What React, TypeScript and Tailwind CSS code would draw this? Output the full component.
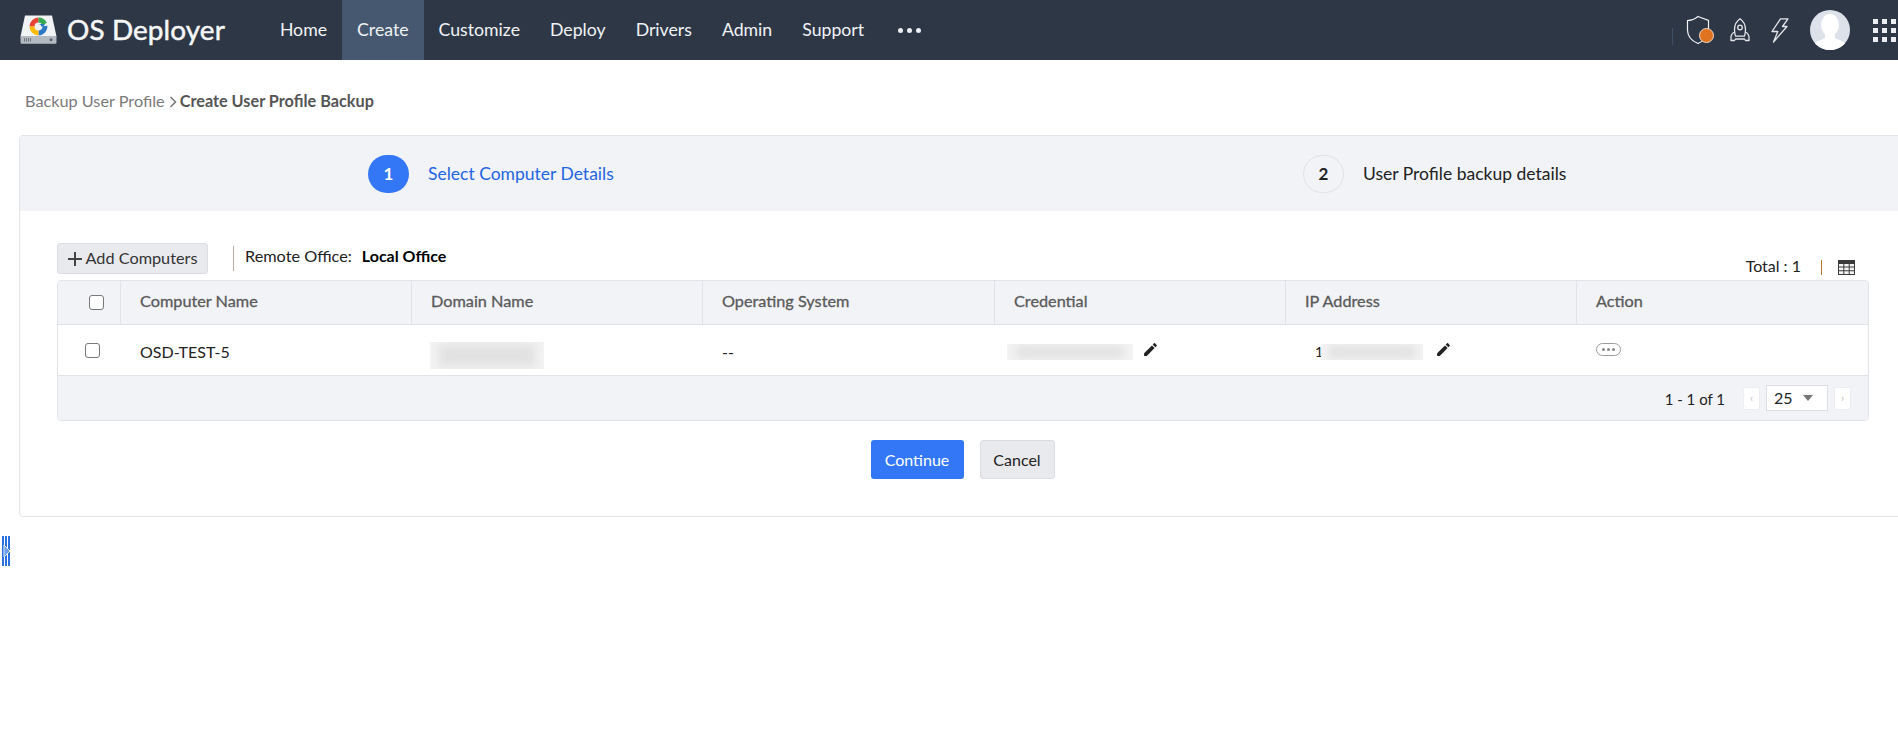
const navItems = ["Home", "Create", "Customize", "Deploy", "Drivers", "Admin", "Support"];

const Pencil = () => (
  <svg viewBox="0 0 24 24" className="w-[17px] h-[17px] fill-[#222]">
    <path d="M3 17.25V21h3.75L17.81 9.94l-3.75-3.75L3 17.25zM20.71 7.04a1 1 0 0 0 0-1.41l-2.34-2.34a1 1 0 0 0-1.41 0l-1.83 1.83 3.75 3.75 1.83-1.83z" />
  </svg>
);

const Blurred = ({ className }: { className: string }) => (
  <div className={`overflow-hidden bg-[#f3f3f3] ${className}`}>
    <div className="w-full h-full bg-[#e2e2e2] blur-[5px] scale-[0.85]" />
  </div>
);

const Checkbox = () => (
  <div className="w-[15px] h-[15px] rounded-[3px] border border-[#77787c] bg-white" />
);

const Logo = () => (
  <svg viewBox="0 0 37 29" className="w-[37px] h-[29px]">
    <path d="M5 0.5h27l4.5 21h-36z" fill="#f1f2f4" />
    <path d="M0.5 21h36v6.5a1.2 1.2 0 0 1-1.2 1.2H1.7a1.2 1.2 0 0 1-1.2-1.2z" fill="#b4bac2" />
    <path d="M4 23h1v3.5H4zM6 23h1v3.5H6zM8 23h1v3.5H8zM10 23h1v3.5h-1z" fill="#6d747d" />
    <circle cx="31" cy="24.8" r="1.5" fill="#5d646d" />
    <g fill="none" strokeWidth="5">
      <path d="M12 11.5a6.5 6.5 0 0 1 6.5-6.5" stroke="#ea4335" />
      <path d="M18.5 5a6.5 6.5 0 0 1 6 4" stroke="#34a853" />
      <path d="M25 11a6.5 6.5 0 0 1-6.5 7" stroke="#2b78c5" />
      <path d="M18.5 18a6.5 6.5 0 0 1-6.5-6.5" stroke="#fbbc05" />
    </g>
    <path d="M18 9h7l-1.5 2.5h-5z" fill="#2b78c5" />
    <circle cx="18.5" cy="11.5" r="2.6" fill="#f1f2f4" />
  </svg>
);

const Shield = () => (
  <div className="relative w-[28px] h-[30px]">
    <svg viewBox="0 0 24 30" className="w-[24px] h-[30px]" fill="none" stroke="#f4f5f7" strokeWidth="1.2">
      <path d="M12 1.5 L22.5 5.5 V15 C22.5 21 18 26 12 28.5 C6 26 1.5 21 1.5 15 V5.5 C6 5.5 9 4 12 1.5z" />
    </svg>
    <div className="absolute right-0 bottom-[2px] w-[15px] h-[15px] rounded-full bg-[#e07320] border border-[#f1d9c4]" />
  </div>
);

const Rocket = () => (
  <svg viewBox="0 0 20 24" className="w-[20px] h-[24px]" fill="none" stroke="#e4e6ea" strokeWidth="1.3" strokeLinejoin="round">
    <path d="M10 0.8C13.8 3.5 15.5 7.5 15.5 11.5c0 2.5-.4 4.5-1 6.7H5.5c-.6-2.2-1-4.2-1-6.7C4.5 7.5 6.2 3.5 10 0.8z" />
    <circle cx="10" cy="9.5" r="2.3" />
    <path d="M4.8 14 C2.5 15 1 17 1 19.5V22.5h3.5l1-1.5h9l1 1.5H19v-3c0-2.5-1.5-4.5-3.8-5.5" />
  </svg>
);

const Bolt = () => (
  <svg viewBox="0 0 18 25" className="w-[18px] h-[25px]" fill="none" stroke="#e4e6ea" strokeWidth="1.3" strokeLinejoin="round">
    <path d="M9.5 0.8H17L11.5 8.5H16L2.5 24 6.8 13.5H1z" />
  </svg>
);

const Avatar = () => (
  <svg viewBox="0 0 40 40" className="w-[40px] h-[40px]">
    <defs>
      <clipPath id="avatar-clip">
        <circle cx="20" cy="20" r="20" />
      </clipPath>
    </defs>
    <circle cx="20" cy="20" r="20" fill="#dde1ea" />
    <g clipPath="url(#avatar-clip)" fill="#fff">
      <ellipse cx="20" cy="15" rx="9" ry="11" />
      <path d="M15 24h10v4c3 2 9 3 11 6v6H4v-6c2-3 8-4 11-6z" />
    </g>
  </svg>
);

const AppsGrid = () => (
  <div className="grid grid-cols-[5px_5px_5px] gap-[4px]">
    {Array.from({ length: 9 }).map((_, i) => (
      <div key={i} className="w-[5px] h-[5px] bg-[#eceef1]" />
    ))}
  </div>
);

const TableIcon = () => (
  <svg viewBox="0 0 17 15" className="w-[17px] h-[15px]">
    <path d="M0 0h17v15H0z" fill="#3a3a3a" />
    <path d="M1 4h4.3v2.6H1zM6.3 4h4.4v2.6H6.3zM11.7 4H16v2.6h-4.3zM1 7.6h4.3v2.6H1zM6.3 7.6h4.4v2.6H6.3zM11.7 7.6H16v2.6h-4.3zM1 11.2h4.3V14H1zM6.3 11.2h4.4V14H6.3zM11.7 11.2H16V14h-4.3z" fill="#f4f4f4" />
  </svg>
);

const Header = () => (
  <header className="flex items-center h-[60px] bg-[#2e3746] text-white">
    <div className="flex items-center pl-[20px]">
      <Logo />
      <span className="ml-[10px] text-[27.9px] tracking-[0.1px] text-[#f5f6f7] [-webkit-text-stroke:0.5px_#f5f6f7]">OS Deployer</span>
    </div>
    <nav className="flex h-full ml-[40px]">
      {navItems.map((item) => (
        <div
          key={item}
          className={`flex items-center px-[15px] text-[17.7px] text-[#f1f3f5] ${item === "Create" ? "bg-[#465870]" : ""}`}
        >
          {item}
        </div>
      ))}
      <div className="flex items-center gap-[4px] ml-[19px]">
        <div className="w-[5px] h-[5px] rounded-full bg-[#eceef1]" />
        <div className="w-[5px] h-[5px] rounded-full bg-[#eceef1]" />
        <div className="w-[5px] h-[5px] rounded-full bg-[#eceef1]" />
      </div>
    </nav>
    <div className="flex items-center ml-auto pr-[2px]">
      <div className="w-px h-[17px] mt-[12px] bg-[#3f5066] mr-[13px]" />
      <Shield />
      <div className="ml-[16px]"><Rocket /></div>
      <div className="ml-[21px]"><Bolt /></div>
      <div className="ml-[21px]"><Avatar /></div>
      <div className="ml-[23px]"><AppsGrid /></div>
    </div>
  </header>
);

const Steps = () => (
  <div className="flex items-center h-[75px] pl-[348px] bg-[#f1f3f7]">
    <div className="flex items-center w-[935px]">
      <div className="flex items-center justify-center w-[41px] h-[38px] rounded-full bg-[#3377f6] text-white text-[17px] font-bold">1</div>
      <span className="ml-[19px] pt-[1px] text-[17.5px] text-[#1f66e0]">Select Computer Details</span>
    </div>
    <div className="flex items-center">
      <div className="flex items-center justify-center w-[41px] h-[38px] rounded-full border border-[#e0e2e7] text-[#222] text-[17px] font-bold">2</div>
      <span className="ml-[19px] pt-[1px] text-[17.5px] text-[#222]">User Profile backup details</span>
    </div>
  </div>
);

const Toolbar = () => (
  <div className="flex items-start h-[69px] pt-[32px]">
    <button className="flex items-center justify-center w-[151px] h-[31px] rounded-[3px] border border-[#dcdde2] bg-[#e9eaee] text-[16.25px] text-[#333]">
      <svg viewBox="0 0 14 14" className="w-[14px] h-[14px] mr-[4px]" stroke="#444" strokeWidth="2">
        <path d="M7 0v14M0 7h14" />
      </svg>
      Add Computers
    </button>
    <div className="w-px h-[25px] mt-[3px] ml-[25px] bg-[#b5ada0]" />
    <span className="ml-[11px] text-[16.25px] leading-[26px] text-[#222]">Remote Office:</span>
    <span className="ml-[10px] text-[16px] leading-[26px] font-bold text-black">Local Office</span>
    <div className="flex items-center ml-auto mt-[15px] pr-[14px]">
      <span className="pb-[3px] text-[16px] leading-[15px] text-[#222]">Total : 1</span>
      <div className="w-px h-[15px] ml-[20px] bg-[#b9772f]" />
      <div className="ml-[16px]"><TableIcon /></div>
    </div>
  </div>
);

const headCols = ["Computer Name", "Domain Name", "Operating System", "Credential", "IP Address", "Action"];

const Table = () => (
  <div className="w-[1812px] rounded-[4px] border border-[#e1e3e9] overflow-hidden">
    <div className="grid grid-cols-[63px_291px_291px_292px_291px_291px_1fr] h-[44px] bg-[#f1f3f7] border-b border-[#e1e3e9]">
      <div className="flex items-center pl-[31px] border-r border-[#e1e3e9]"><Checkbox /></div>
      {headCols.map((col) => (
        <div key={col} className="flex items-center pl-[19px] pb-[2px] text-[16.25px] text-[#5a5a5a] [-webkit-text-stroke:0.3px_#5a5a5a] border-r last:border-r-0 border-[#e1e3e9]">
          {col}
        </div>
      ))}
    </div>
    <div className="grid grid-cols-[63px_291px_291px_292px_291px_291px_1fr] h-[51px] bg-white border-b border-[#e1e3e9] text-[16px] text-[#222]">
      <div className="pl-[27px] pt-[18px]"><Checkbox /></div>
      <div className="pl-[19px] pt-[17px] leading-[20px]">OSD-TEST-5</div>
      <div className="pl-[18px] pt-[17px]"><Blurred className="w-[114px] h-[27px]" /></div>
      <div className="pl-[19px] pt-[17px] leading-[20px]">--</div>
      <div className="flex items-start pl-[12px] pt-[19px]">
        <Blurred className="w-[126px] h-[16px]" />
        <div className="ml-[9px] -mt-[3px]"><Pencil /></div>
      </div>
      <div className="flex items-start pl-[29px] pt-[19px]">
        <span className="text-[14px] leading-[16px]">1</span>
        <Blurred className="w-[102px] h-[16px] -ml-[2px]" />
        <div className="ml-[12px] -mt-[3px]"><Pencil /></div>
      </div>
      <div className="pl-[19px] pt-[18px]">
        <div className="flex items-center justify-center gap-[2px] w-[25px] h-[13px] rounded-full border border-[#9b9b9b]">
          <div className="w-[3px] h-[3px] rounded-full bg-[#8a8a8a]" />
          <div className="w-[3px] h-[3px] rounded-full bg-[#8a8a8a]" />
          <div className="w-[3px] h-[3px] rounded-full bg-[#8a8a8a]" />
        </div>
      </div>
    </div>
    <div className="flex items-center justify-end h-[44px] pr-[17px] bg-[#f1f3f7] text-[15px] text-[#222]">
      <span className="pt-[2px]">1 - 1 of 1</span>
      <div className="flex items-center justify-center w-[17px] h-[23px] ml-[18px] rounded-[2px] border border-[#eceef2] bg-white text-[11px] text-[#c0c0c0]">‹</div>
      <div className="flex items-center w-[62px] h-[26px] ml-[6px] pl-[7px] border border-[#dcdee3] bg-white text-[16px]">
        25
        <div className="ml-[10px] w-0 h-0 border-x-[5px] border-x-transparent border-t-[6px] border-t-[#777]" />
      </div>
      <div className="flex items-center justify-center w-[17px] h-[23px] ml-[6px] rounded-[2px] border border-[#eceef2] bg-white text-[11px] text-[#c0c0c0]">›</div>
    </div>
  </div>
);

export default function App() {
  return (
    <div className="w-[1898px] h-[737px] overflow-hidden bg-white [font-family:Lato,sans-serif]">
      <Header />
      <div className="flex items-center h-[75px] pt-[8px] pl-[25px] text-[16.25px]">
        <span className="text-[#7a7a7a]">Backup User Profile</span>
        <svg viewBox="0 0 8 12" className="w-[8px] h-[12px] ml-[4px] mr-[3px]" fill="none" stroke="#7a7a7a" strokeWidth="1.6">
          <path d="M1.5 1l5 5-5 5" />
        </svg>
        <span className="font-bold text-[#555]">Create User Profile Backup</span>
      </div>
      <div className="ml-[19px] w-[1900px] h-[382px] rounded-[4px] border border-[#e1e3e9]">
        <Steps />
        <div className="pl-[37px] w-[1849px]">
          <Toolbar />
          <Table />
          <div className="flex justify-center gap-[16px] w-[1812px] mt-[19px] pr-[1px]">
            <button className="w-[93px] h-[39px] rounded-[3px] bg-[#3377f6] text-[16px] text-white">Continue</button>
            <button className="w-[75px] h-[39px] rounded-[3px] border border-[#dcdde2] bg-[#e9eaee] text-[16px] text-[#222]">Cancel</button>
          </div>
        </div>
      </div>
      <div className="relative flex gap-[1px] w-[8px] h-[30px] mt-[19px] ml-[2px]">
        <div className="w-[2px] h-full bg-[#2a70e0]" />
        <div className="w-[2px] h-full bg-[#2a70e0]" />
        <div className="w-[2px] h-full bg-[#2a70e0]" />
        <svg viewBox="0 0 8 14" className="absolute left-[1px] top-[8px] w-[8px] h-[14px]">
          <path d="M1 1l6 6-6 6z" fill="#6d9ff0" stroke="#e4edfb" strokeWidth="1" />
        </svg>
      </div>
    </div>
  );
}
